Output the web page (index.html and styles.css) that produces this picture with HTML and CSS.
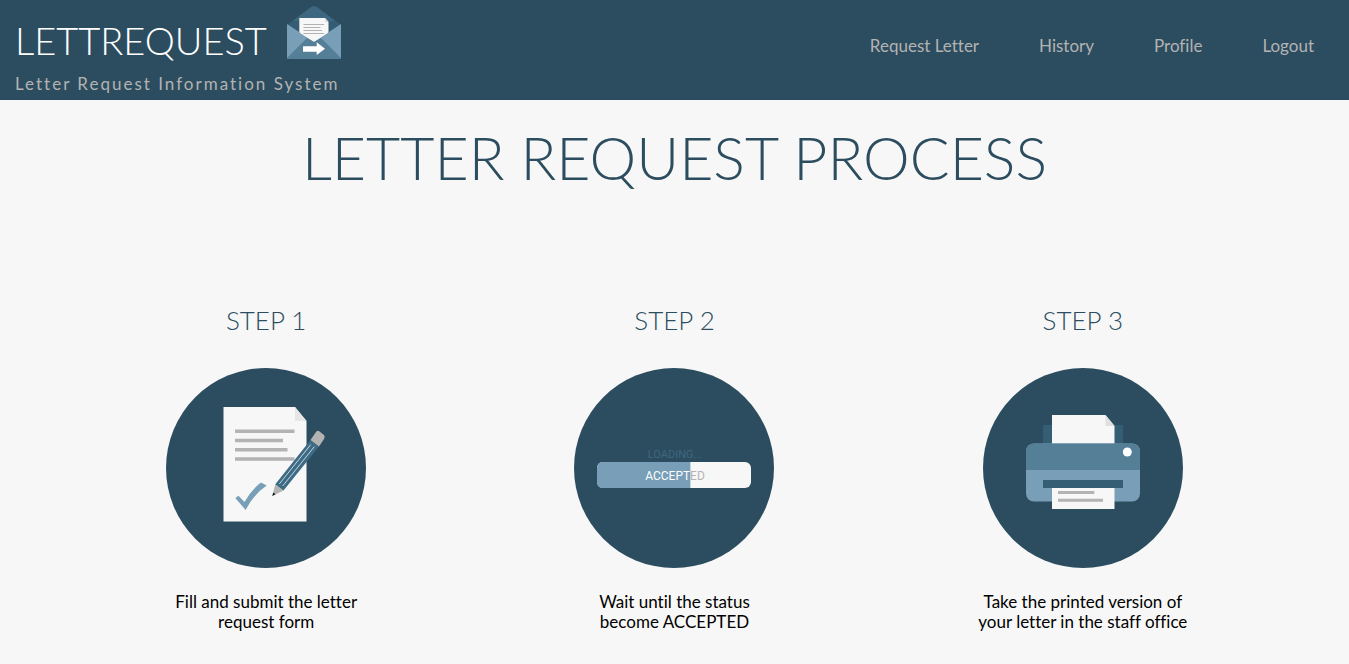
FILE: index.html
```html
<!DOCTYPE html>
<html lang="en">
<head>
<meta charset="utf-8">
<title>Lettrequest</title>
<meta name="viewport" content="width=device-width, initial-scale=1">
<link rel="stylesheet" href="styles.css">
</head>
<body>
<header class="site-header">
  <div class="brand">
    <div class="brand-row">
      <span class="brand-name">LETTREQUEST</span>
      <svg class="brand-icon" viewBox="0 0 54 54" aria-hidden="true">
        <path fill="#3d6780" d="M0 19 24 1Q27-1 30 1L54 19V30H0Z"/>
        <path fill="#2f566c" d="M0 19 5 15H49L54 19V30H0Z" opacity=".6"/>
        <path fill="#f7f7f7" d="M12.300 12H38L41.500 16V38H12.300Z"/>
        <path fill="#ddd" d="M38 12V16H41.500Z"/>
        <path fill="#789fb7" d="M0 18 27 35.700 54 18V51.500Q54 53 52 53H2Q0 53 0 51.500Z"/>
        <path fill="#557e97" d="M0 52 20 32 27 35.700 34 32 54 52Q54 53 52 53H2Q0 53 0 52Z"/>
        <path fill="#f7f7f7" d="M12.300 26.500 27 35.700 41.500 26.500Z"/>
        <path stroke="#b3b3b3" stroke-width="1.200" d="M16.500 18.500H37M16.500 21.500H33.500M16.500 24.500H35M16.500 27.500H37"/>
        <path fill="#fff" d="M16 40.300H29.700V36.300L38 42.700 29.700 49V45.700H16Z"/>
      </svg>
    </div>
    <div class="tagline">Letter Request Information System</div>
  </div>
  <nav class="nav">
    <a href="#request">Request Letter</a>
    <a href="#history">History</a>
    <a href="#profile">Profile</a>
    <a href="#logout">Logout</a>
  </nav>
</header>
<main>
  <h1 class="title">LETTER REQUEST PROCESS</h1>
  <div class="steps">
    <section class="step">
      <h2 class="step-title">STEP 1</h2>
      <svg class="step-art" viewBox="0 0 200 200" aria-hidden="true">
        <circle cx="100" cy="100" r="100" fill="#2c4d5f"/>
        <path fill="#f7f7f7" d="M57.500 39H129L140.500 53V153.500H57.500Z"/>
        <path fill="#e6e6e6" d="M129 39V53H140.500Z"/>
        <path stroke="#b3b3b3" stroke-width="3.500" d="M69 63.200H128.500M69 72.500H117M69 81.800H121.500M69 91H128.500"/>
        <path fill="#789fb7" d="M69.300 130 72.500 127.700 78.500 134Q86 121 95 114.500L100.700 117.500Q88 126 79.600 142Z"/>
        <path fill="#b3b3b3" d="M106.300 128 109.300 116.300 117.500 122.500Z"/>
        <path fill="#1a1a1a" d="M106.300 128 107.200 124.600 109.600 126.300Z"/>
        <path fill="#3d6b86" d="M109.300 116.300 144.500 72 153 78.500 117.500 122.500Z"/>
        <path fill="#b3b3b3" d="M144.500 72 150 64Q151.500 62 153.500 63.500L158 67Q159.500 68.500 158 71L153 78.500Z"/>
        <path stroke="#d5e1e8" stroke-width=".9" d="M113.300 116 144.700 76.700M116.700 118 148.300 78.700"/>
      </svg>
      <p class="step-text">Fill and submit the letter request form</p>
    </section>
    <section class="step">
      <h2 class="step-title">STEP 2</h2>
      <svg class="step-art" viewBox="0 0 200 200" role="img" aria-label="Loading, accepted">
        <defs>
          <linearGradient id="split" gradientUnits="userSpaceOnUse" x1="0" y1="0" x2="200" y2="0">
            <stop offset=".582" stop-color="#fff"/>
            <stop offset=".582" stop-color="#b3b3b3"/>
          </linearGradient>
        </defs>
        <circle cx="100" cy="100" r="100" fill="#2c4d5f"/>
        <rect x="23" y="94" width="154" height="26" rx="6" fill="#f7f7f7"/>
        <path fill="#789fb7" d="M29 94H116.400V120H29Q23 120 23 114V100Q23 94 29 94Z"/>
        <text class="art-loading" x="101" y="90">LOADING...</text>
        <text class="art-accepted" x="101" y="112" fill="url(#split)">ACCEPTED</text>
      </svg>
      <p class="step-text">Wait until the status become ACCEPTED</p>
    </section>
    <section class="step">
      <h2 class="step-title">STEP 3</h2>
      <svg class="step-art" viewBox="0 0 200 200" aria-hidden="true">
        <circle cx="100" cy="100" r="100" fill="#2c4d5f"/>
        <path fill="#355e74" d="M60 57H140V76H60Z"/>
        <path fill="#f7f7f7" d="M69 47H122.500L131.500 58V76H69Z"/>
        <path fill="#e0e0e0" d="M122.500 47V58H131.500Z"/>
        <rect x="43" y="75.500" width="114" height="58" rx="8" fill="#789fb7"/>
        <path fill="#557e97" d="M43 102V83.500Q43 75.500 51 75.500H149Q157 75.500 157 83.500V102Z"/>
        <circle cx="144.300" cy="84" r="4.500" fill="#fff"/>
        <path fill="#355e74" d="M60 112H140V120H60Z"/>
        <path fill="#f7f7f7" d="M69 120H131.500V141H69Z"/>
        <path stroke="#b3b3b3" stroke-width="3" d="M75 124.500H111.300M75 132.200H120"/>
      </svg>
      <p class="step-text">Take the printed version of your letter in the staff office</p>
    </section>
  </div>
</main>
</body>
</html>
```
FILE: styles.css
```css
* {
  box-sizing: border-box;
}

body {
  margin: 0;
  background: #f7f7f7;
  color: #000;
  font: 17px/20px Lato, "Open Sans", sans-serif;
  font-variant-ligatures: none;
}

.site-header {
  display: flex;
  justify-content: space-between;
  align-items: flex-start;
  min-height: 100px;
  padding: 6px 35px 0 15px;
  background: #2c4d5f;
}

.brand-row {
  display: flex;
  align-items: center;
  gap: 20px;
}

.brand-name {
  color: #fff;
  font-size: 38px;
  font-weight: 300;
  line-height: 68px;
}

.brand-icon {
  display: block;
  width: 54px;
  height: 54px;
  margin-bottom: 14px;
}

.tagline {
  color: #b3b3b3;
  letter-spacing: 2px;
}

.nav {
  display: flex;
  gap: 60px;
  padding-top: 30px;
}

.nav a {
  color: #b3b3b3;
  text-decoration: none;
}

.title {
  margin: 0;
  padding: 18px 20px 0;
  color: #2c4d5f;
  font-size: 59px;
  font-weight: 300;
  line-height: 80px;
  text-align: center;
}

.steps {
  display: grid;
  grid-template-columns: repeat(3, 1fr);
  padding: 102px 62px 32px;
}

.step {
  display: flex;
  flex-direction: column;
  align-items: center;
}

.step-title {
  margin: 0 0 28px;
  color: #2c4d5f;
  font-size: 26px;
  font-weight: 300;
  line-height: 40px;
}

.step-art {
  display: block;
  width: 200px;
  height: 200px;
}

.step-text {
  width: 212px;
  margin: 24px 0 0;
  text-align: center;
}

.art-loading,
.art-accepted {
  font-family: Roboto, sans-serif;
  font-size: 12px;
  text-anchor: middle;
}

.art-loading {
  fill: #3d6780;
  font-size: 11px;
}
```
